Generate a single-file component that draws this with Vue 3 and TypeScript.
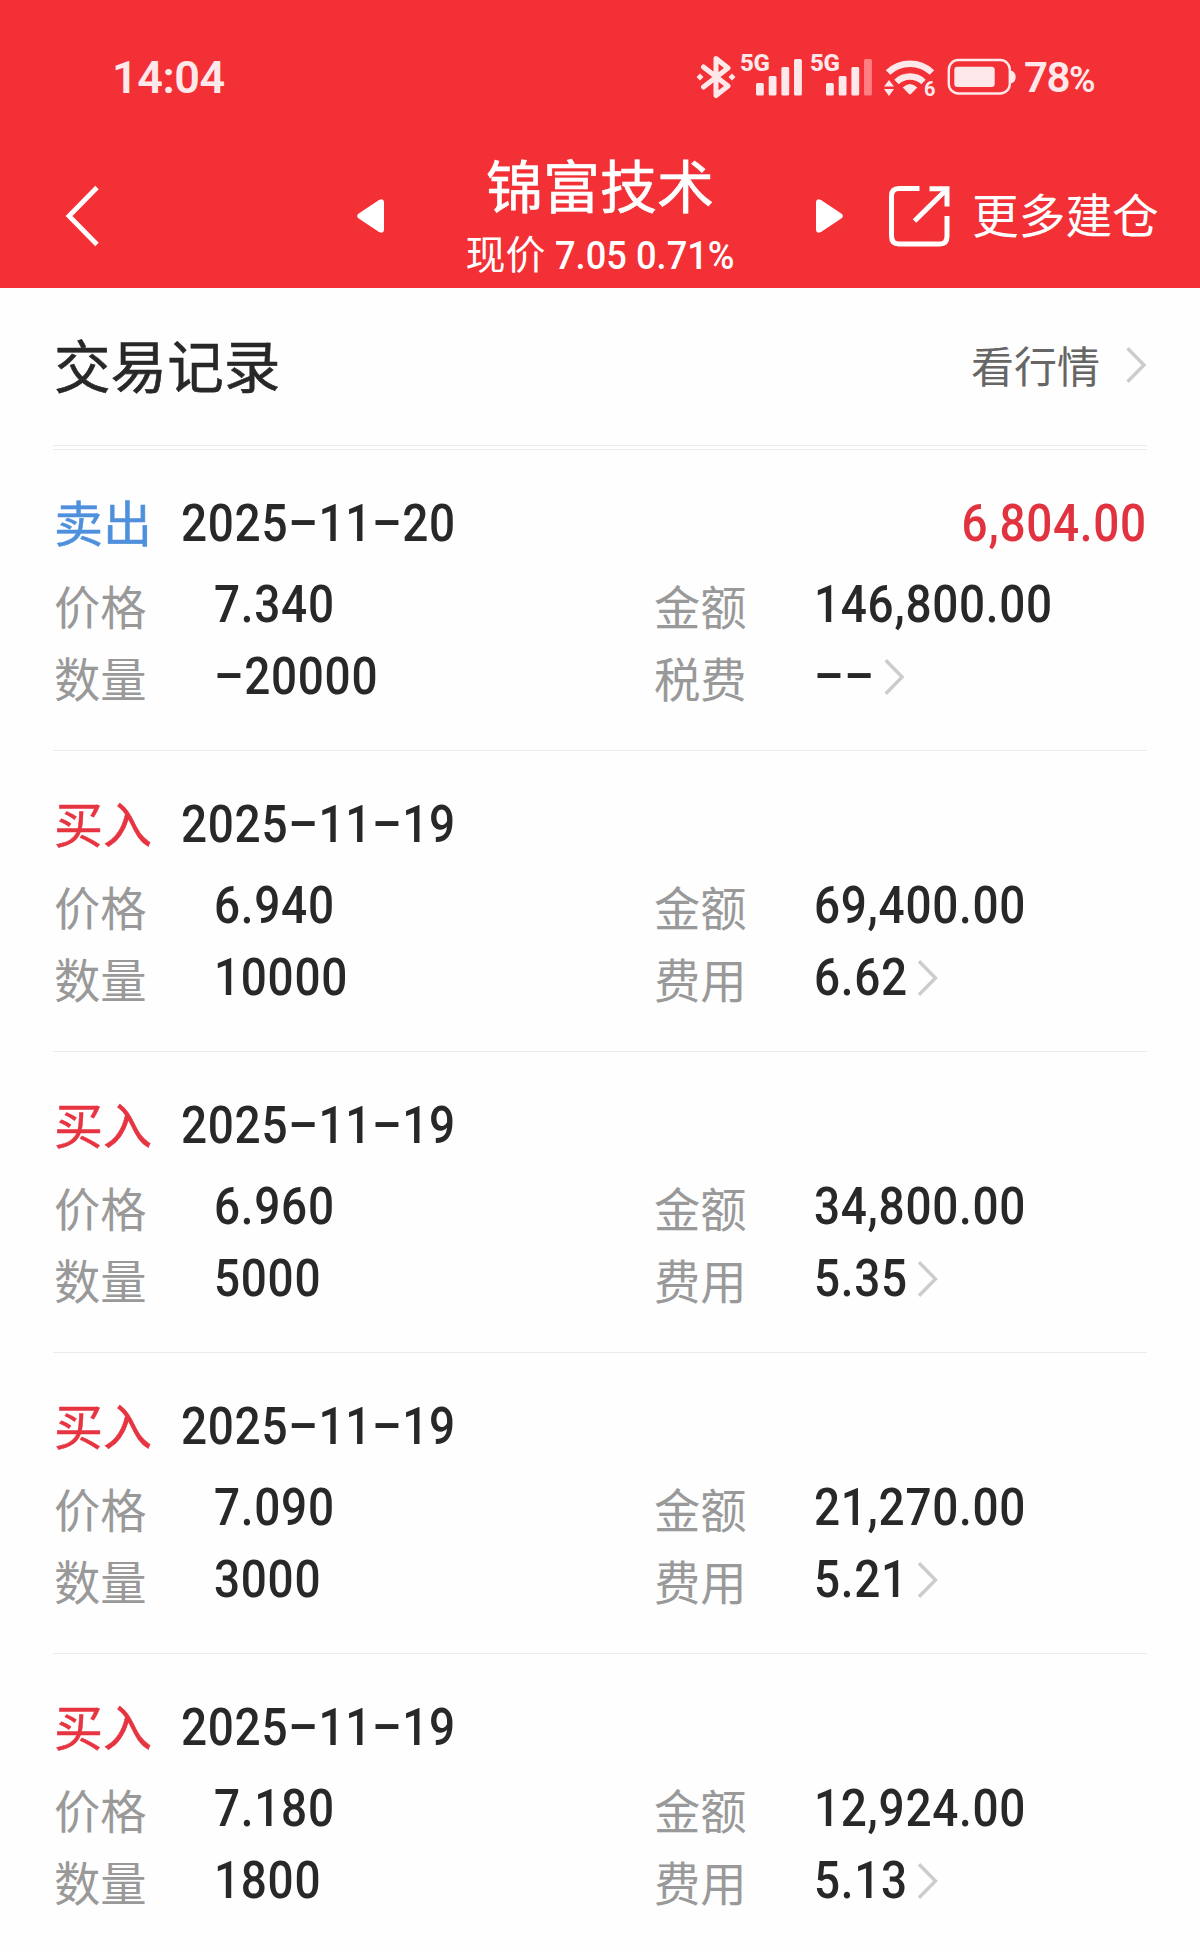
<script setup lang="ts">
interface Trade {
  kind: 'buy' | 'sell'
  date: string
  price: string
  quantity: string
  amount: string
  feeLabel: string
  fee: string
  profit?: string
}

const trades: Trade[] = [
  { kind: 'sell', date: '2025–11–20', price: '7.340', quantity: '–20000', amount: '146,800.00', feeLabel: '税费', fee: '––', profit: '6,804.00' },
  { kind: 'buy', date: '2025–11–19', price: '6.940', quantity: '10000', amount: '69,400.00', feeLabel: '费用', fee: '6.62' },
  { kind: 'buy', date: '2025–11–19', price: '6.960', quantity: '5000', amount: '34,800.00', feeLabel: '费用', fee: '5.35' },
  { kind: 'buy', date: '2025–11–19', price: '7.090', quantity: '3000', amount: '21,270.00', feeLabel: '费用', fee: '5.21' },
  { kind: 'buy', date: '2025–11–19', price: '7.180', quantity: '1800', amount: '12,924.00', feeLabel: '费用', fee: '5.13' },
]
</script>

<template>
  <div class="page">
    <header class="top">
      <div class="status">
        <span class="time">14:04</span>
        <div class="indicators">
          <svg class="bluetooth" width="40" height="44" viewBox="0 0 40 44" fill="none" stroke="currentColor" stroke-width="5" stroke-linejoin="round" stroke-linecap="round">
            <path d="M7.5 12 L32 31 L20 40.5 V3.5 L32 13 L7.5 32" />
            <path d="M4 18.5 L7.5 22 L4 25.5 L.5 22Z M36 18.5 L39.5 22 L36 25.5 L32.500 22Z" fill="currentColor" stroke="none" />
          </svg>
          <div class="cell">
            <span class="net">5G</span>
            <svg width="46" height="37" viewBox="0 0 46 37" fill="currentColor">
              <rect x="0" y="24" width="7.800" height="12.500" rx="1.500" />
              <rect x="12.700" y="17" width="7.800" height="19.500" rx="1.500" />
              <rect x="25.400" y="8" width="7.800" height="28.500" rx="1.500" />
              <rect x="38" y="0" width="7.900" height="36.500" rx="1.500" />
            </svg>
          </div>
          <div class="cell second">
            <span class="net">5G</span>
            <svg width="46" height="37" viewBox="0 0 46 37" fill="currentColor">
              <rect x="0" y="24" width="7.800" height="12.500" rx="1.500" />
              <rect x="12.700" y="17" width="7.800" height="19.500" rx="1.500" />
              <rect x="25.400" y="8" width="7.800" height="28.500" rx="1.500" />
              <rect x="38" y="0" width="7.900" height="36.500" rx="1.500" fill="#ff7f83" />
            </svg>
          </div>
          <div class="wifi">
            <svg width="52" height="40" viewBox="0 0 52 40" fill="none" stroke="currentColor" stroke-width="6.500">
              <path d="M4 13.500 A32 32 0 0 1 48 13.500" />
              <path d="M12.500 23 A19.500 19.500 0 0 1 39.500 23" />
              <path d="M18.700 28.500 Q26 21.500 33.300 28.500 L27.200 34.800 Q26 36 24.800 34.800Z" fill="currentColor" stroke="none" />
              <path d="M5 21 L10 27.500 H0Z M0 30 H10 L5 37Z" fill="currentColor" stroke="none" />
            </svg>
            <span class="six">6</span>
          </div>
          <svg class="battery" width="70" height="38" viewBox="0 0 70 38" fill="none">
            <rect x="1.800" y="2" width="61" height="33.500" rx="9.500" stroke="currentColor" stroke-width="2.400" />
            <rect x="7.300" y="8.700" width="40.400" height="20.300" rx="3" fill="currentColor" />
            <path d="M64 12.500 Q68.700 14 68.700 19 Q68.700 24 64 25.500Z" fill="currentColor" />
          </svg>
          <span class="level">78<small>%</small></span>
        </div>
      </div>

      <nav class="nav">
        <svg class="back" width="36" height="62" viewBox="0 0 36 62" fill="none" stroke="#fff" stroke-width="4.800">
          <path d="M33 2.500 L5 31 L33 59.500" />
        </svg>
        <svg class="prev" width="28" height="36" viewBox="0 0 28 36" fill="#fff">
          <path d="M1 16 Q-.5 18 1 20 L22 34 Q26.500 36 27 32 V4 Q26.500 0 22 2Z" />
        </svg>
        <div class="stock">
          <h1>锦富技术</h1>
          <p>现价 <span>7.05 0.71%</span></p>
        </div>
        <svg class="next" width="28" height="36" viewBox="0 0 28 36" fill="#fff">
          <path d="M27 16 Q28.500 18 27 20 L6 34 Q1.500 36 1 32 V4 Q1.500 0 6 2Z" />
        </svg>
        <a class="more">
          <svg width="61" height="61" viewBox="0 0 61 61" fill="none" stroke="#fff" stroke-width="5">
            <path d="M30.500 2.500 H10 Q2.500 2.500 2.500 10 V50 Q2.500 58 10 58 H51 Q58 58 58 50 V30" />
            <path d="M40.500 2.700 H58 V20.500 M57 4 L25.500 35" />
          </svg>
          <span>更多建仓</span>
        </a>
      </nav>
    </header>

    <main>
      <div class="heading">
        <h2>交易记录</h2>
        <a class="quote">
          <span>看行情</span>
          <svg width="21" height="36" viewBox="0 0 21 36" fill="none" stroke="#ccc" stroke-width="3.400"><path d="M1.500 1.200 L18 18 L1.500 34.800" /></svg>
        </a>
      </div>

      <section v-for="(t, i) in trades" :key="i" class="trade">
        <div class="summary">
          <span class="kind" :class="t.kind">{{ t.kind === 'sell' ? '卖出' : '买入' }}</span>
          <span class="num date">{{ t.date }}</span>
          <span v-if="t.profit" class="num profit">{{ t.profit }}</span>
        </div>
        <div class="fields">
          <span class="label">价格</span>
          <span class="num">{{ t.price }}</span>
          <span class="label">金额</span>
          <span class="num">{{ t.amount }}</span>
          <span class="label">数量</span>
          <span class="num">{{ t.quantity }}</span>
          <span class="label">{{ t.feeLabel }}</span>
          <span class="num fee">
            <span>{{ t.fee }}</span>
            <svg width="23.300" height="36" viewBox="0 0 21 36" preserveAspectRatio="none" fill="none" stroke="#ccc" stroke-width="3.400"><path d="M1.500 1.200 L18 18 L1.500 34.800" /></svg>
          </span>
        </div>
      </section>
    </main>
  </div>
</template>

<style>
body {
  margin: 0;
  background: #fefefe;
}
</style>

<style scoped>
.page {
  width: 1200px;
  height: 1952px;
  overflow: hidden;
  background: #fefefe;
  color: #282828;
  font-family: Roboto, "Noto Sans CJK SC", sans-serif;
}
svg {
  display: block;
  flex: none;
}
h1, h2, p {
  margin: 0;
  font-weight: 400;
}
.top {
  height: 288px;
  background: #f23036;
  color: #fff;
}
.status {
  box-sizing: border-box;
  height: 144px;
  padding: 55px 0 0 112px;
  display: flex;
  color: #ffe8e9;
}
.time {
  width: 584px;
  height: 45px;
  font-size: 45px;
  line-height: 45px;
  font-weight: 600;
  letter-spacing: -0.500px;
}
.indicators {
  display: flex;
  align-items: flex-start;
}
.cell {
  position: relative;
  margin-left: 20px;
  padding-top: 4px;
}
.cell.second {
  margin-left: 24px;
}
.net {
  position: absolute;
  left: -16px;
  top: -4px;
  font-size: 24px;
  line-height: 24px;
  font-weight: 800;
  letter-spacing: -0.300px;
}
.wifi {
  position: relative;
  margin-left: 12px;
  padding-top: 4px;
  width: 52px;
}
.six {
  position: absolute;
  left: 40px;
  top: 24px;
  font-size: 20px;
  line-height: 20px;
  font-weight: 700;
}
.battery {
  margin: 3px 0 0 11px;
}
.level {
  margin-left: 7px;
  font-size: 42px;
  line-height: 45px;
  font-weight: 600;
  letter-spacing: -1.500px;
}
.level small {
  font-size: 36px;
}
.nav {
  height: 144px;
  display: flex;
  align-items: center;
  padding-left: 64px;
}
.prev {
  margin-left: 257px;
}
.stock {
  width: 430px;
  text-align: center;
}
h1 {
  margin-top: -7px;
  font-size: 57px;
  line-height: 70px;
  -webkit-text-stroke: 0.600px currentColor;
}
.stock p {
  margin-bottom: -9px;
  padding-top: 8px;
  font-size: 40px;
  line-height: 48px;
  white-space: nowrap;
}
.stock p span {
  display: inline-block;
  margin-right: -14px;
  font-size: 39px;
  font-weight: 500;
  transform: scaleX(0.93);
  transform-origin: left;
}
.more {
  display: flex;
  align-items: center;
  margin-left: 46px;
  gap: 22px;
  font-size: 46.700px;
}
.more span {
  padding-bottom: 7px;
}
main {
  padding: 0 53px;
}
.heading {
  box-sizing: border-box;
  height: 158px;
  padding-bottom: 3px;
  border-bottom: 1px solid #ebebeb;
  display: flex;
  align-items: center;
  justify-content: space-between;
  margin-bottom: 3px;
}
h2 {
  font-size: 56.600px;
  padding: 0 0 5px 1px;
  -webkit-text-stroke: 0.600px currentColor;
}
.quote {
  display: flex;
  align-items: center;
  gap: 26px;
  color: #666;
  font-size: 43px;
}
.quote span {
  padding-bottom: 2px;
}
.trade {
  box-sizing: border-box;
  height: 301px;
  border-top: 1px solid #ebebeb;
  padding-top: 37px;
}
.summary {
  height: 72px;
  display: flex;
  align-items: center;
}
.kind {
  box-sizing: border-box;
  width: 128px;
  padding: 5px 0 0 1px;
  font-size: 49px;
  line-height: 72px;
  -webkit-text-stroke: 0.500px currentColor;
}
.sell {
  color: #4f90dd;
}
.buy {
  color: #e63440;
}
/* Narrow figures, close to the proportions of a DIN face */
.num {
  font-size: 51px;
  line-height: 72px;
  font-weight: 500;
  letter-spacing: 0.800px;
  transform: scaleX(0.9);
  transform-origin: left;
}
.summary .num {
  padding-top: 2px;
}
.profit {
  margin-left: auto;
  color: #e0323f;
  transform-origin: right;
}
.fields {
  margin-top: 10px;
  display: grid;
  grid-template-columns: 161px 439px 161px auto;
  grid-auto-rows: 72px;
}
.label {
  padding: 4px 0 0 1px;
  color: #999;
  font-size: 46.300px;
  line-height: 72px;
}
.fee {
  display: flex;
  align-items: center;
  gap: 11px;
}
</style>
